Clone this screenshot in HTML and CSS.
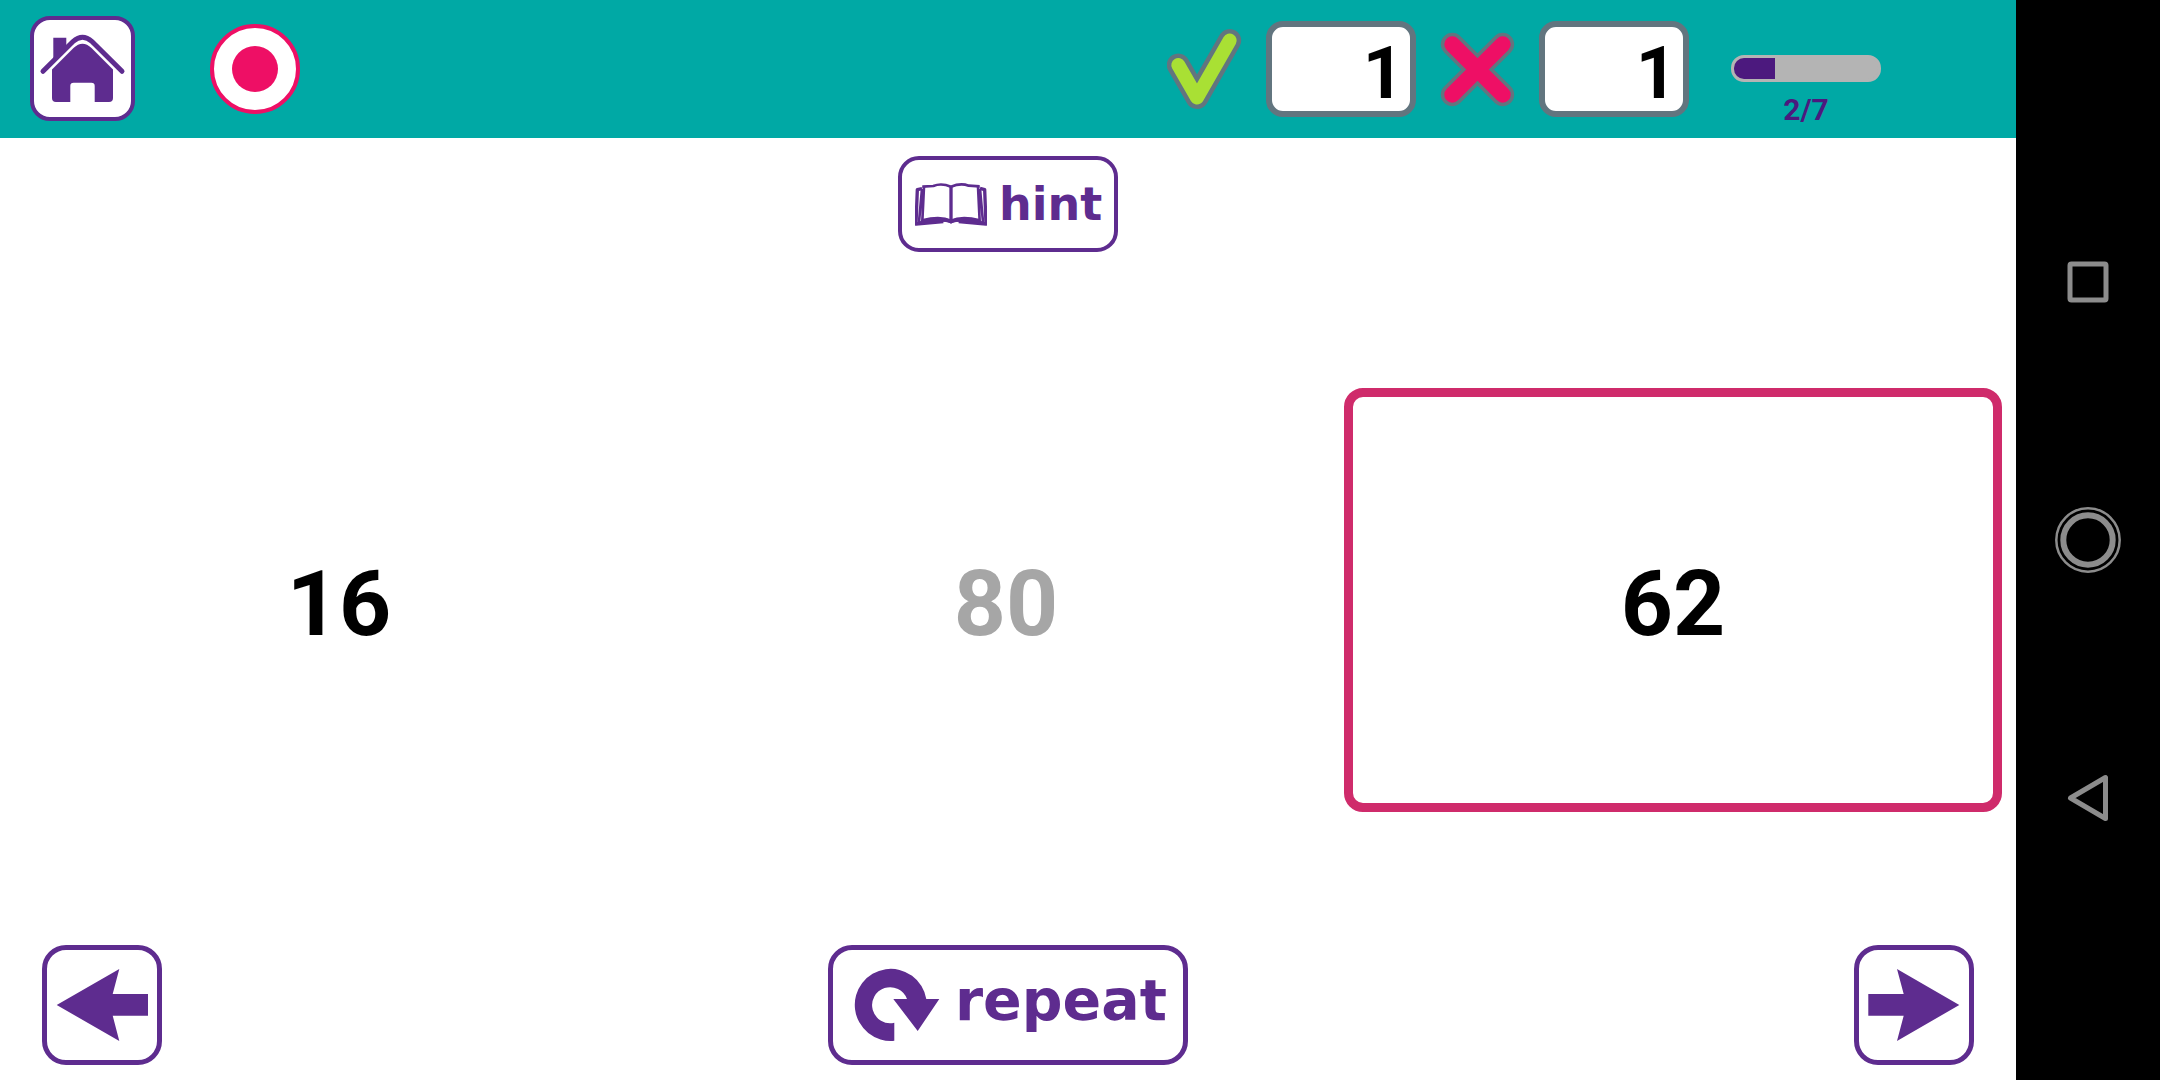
FILE: index.html
```html
<!DOCTYPE html>
<html lang="en">
<head>
<meta charset="utf-8">
<meta name="viewport" content="width=device-width, initial-scale=1">
<title>Number exercise</title>
<link rel="stylesheet" href="styles.css">
</head>
<body>
<div class="app">
  <header class="topbar">
    <button class="btn btn-home" type="button" aria-label="Home">
      <svg viewBox="4 4 97 97" aria-hidden="true">
        <path class="fill" d="M23.3 21.7h13v10l-13 13z"/>
        <path class="roof" d="M13 55.3 43 25.5Q52.5 17 62 25.5L92 55.3"/>
        <path class="fill" d="M22 53.5 43.5 32Q52.5 23.500 61.500 32L83 53.5V82q0 4-4 4H64.700V70q0-3.300-3.300-3.300H43.600q-3.300 0-3.300 3.300V86H26q-4 0-4-4z"/>
      </svg>
    </button>
    <button class="record" type="button" aria-label="Record"><span class="record-dot"></span></button>
    <div class="score">
      <svg class="check" viewBox="0 0 75 84" aria-hidden="true">
        <path class="mark-edge" d="M11.300 38 30 70.500 62.700 13.500"/>
        <path class="check-face" d="M11.300 38 30 70.500 62.700 13.500"/>
      </svg>
      <input class="score-box" type="text" value="1" aria-label="Correct answers" readonly>
      <svg class="cross" viewBox="0 0 75 75" aria-hidden="true">
        <path class="mark-edge" d="M12.300 12.300 62.700 62.700M62.700 12.300 12.300 62.700"/>
        <path class="cross-face" d="M12.300 12.300 62.700 62.700M62.700 12.300 12.300 62.700"/>
      </svg>
      <input class="score-box" type="text" value="1" aria-label="Wrong answers" readonly>
    </div>
    <div class="steps">
      <progress class="steps-bar" id="steps" value="2" max="7"></progress>
      <label class="steps-label" for="steps">2/7</label>
    </div>
  </header>

  <main class="exercise">
    <button class="btn btn-hint" type="button">
      <svg class="book" viewBox="105 125 216 132" aria-hidden="true">
        <path class="book-line thick" d="M213 139V245"/>
        <path class="book-line" d="M213 139Q184 127 160 137L127 139M213 139Q242 127 266 136L299 138"/>
        <path class="book-line" d="M132 137 127 242M294 137 299 242M126 146 117 245M300 146 309 245"/>
        <path class="book-line thick" d="M126 145 112 148 108 251 190 244M300 144 314 148 318 251 236 244"/>
        <path class="book-line" d="M127 240Q180 226 213 241Q246 226 299 240M120 247Q180 232 213 245Q246 232 306 247"/>
        <path class="fill" d="M196 233 213 239 230 233 242 244 222 245 213 250 204 245 184 244z"/>
      </svg>
      <span>hint</span>
    </button>

    <div class="choices">
      <button class="choice" type="button">16</button>
      <button class="choice choice-muted" type="button">80</button>
      <button class="choice choice-selected" type="button" aria-pressed="true">62</button>
    </div>

    <div class="controls">
      <button class="btn btn-step" type="button" aria-label="Previous">
        <svg viewBox="5 5 110 110" aria-hidden="true"><path class="fill" d="M14.700 60 77.300 24 70.700 49H106V70.700H70.700L77.300 96z"/></svg>
      </button>
      <button class="btn btn-repeat" type="button">
        <svg class="loop" viewBox="26 20 88 80" aria-hidden="true"><path class="fill" d="M67.300 95.700A36 36 0 1 1 99.300 54H112.300L90.700 86 66.300 54H80A18 18 0 1 0 67.300 77.700z"/></svg>
        <span class="repeat-text">repeat</span>
      </button>
      <button class="btn btn-step" type="button" aria-label="Next">
        <svg viewBox="5 5 110 110" aria-hidden="true"><path class="fill" d="M105.300 60 43 24 49.700 49H14.300V70.700H49.700L43 96z"/></svg>
      </button>
    </div>
  </main>
</div>

<nav class="sysnav" aria-label="System">
  <button type="button" aria-label="Recent apps">
    <svg viewBox="0 0 66 66" aria-hidden="true"><rect x="15" y="15" width="36" height="36" rx="1.500" stroke-width="5"/></svg>
  </button>
  <button type="button" aria-label="Home screen">
    <svg viewBox="0 0 66 66" aria-hidden="true"><circle cx="33" cy="33" r="31.700" stroke-width="2.500"/><circle cx="33" cy="33" r="24.700" stroke-width="6"/></svg>
  </button>
  <button type="button" aria-label="Back">
    <svg viewBox="0 0 66 66" aria-hidden="true"><path d="M15.500 33 50.500 12.500V53.500z" stroke-width="5"/></svg>
  </button>
</nav>
</body>
</html>
```
FILE: styles.css
```css
:root {
  --purple: #5e2c8f;
  --deep-purple: #4c197e;
  --teal: #00a9a5;
  --pink: #ee0f65;
  --slate: #62757f;
}

* { box-sizing: border-box; }

body {
  margin: 0;
  min-height: 100vh;
  display: flex;
  background: #fff;
  font-family: Roboto, "Liberation Sans", sans-serif;
  font-weight: 700;
}

button {
  margin: 0;
  padding: 0;
  border: 0;
  background: none;
  font: inherit;
  color: inherit;
  cursor: pointer;
}

svg { display: block; fill: none; flex: none; }

.fill { fill: var(--purple); }

.app {
  flex: 1;
  min-width: 0;
  display: flex;
  flex-direction: column;
}

/* Top bar */
.topbar {
  height: 138px;
  padding: 0 135px 0 30px;
  display: flex;
  align-items: center;
  background: var(--teal);
}

.btn {
  display: flex;
  align-items: center;
  border: 5px solid var(--purple);
  border-radius: 24px;
  background: #fff;
  color: var(--purple);
  font-family: "DejaVu Sans", Verdana, sans-serif;
  font-weight: 700;
}

.btn-home {
  width: 105px;
  height: 105px;
  margin-bottom: 1px;
  border-width: 4px;
  border-radius: 20px;
}

.roof {
  stroke: var(--purple);
  stroke-width: 5;
  stroke-linecap: round;
}

.record {
  width: 90px;
  height: 90px;
  margin-left: 75px;
  display: grid;
  place-items: center;
  border: 4px solid var(--pink);
  border-radius: 50%;
  background: #fff;
}

.record-dot {
  width: 46px;
  height: 46px;
  border-radius: 50%;
  background: var(--pink);
}

.score {
  margin-left: auto;
  display: flex;
  align-items: center;
  gap: 24px;
}

.check { width: 75px; height: 84px; }
.cross { width: 75px; height: 75px; }

.check path,
.cross path {
  stroke-linecap: round;
  stroke-linejoin: round;
}

.mark-edge { stroke: var(--slate); stroke-width: 23; }
.check-face { stroke: #a9e034; stroke-width: 14; }
.cross-face { stroke: var(--pink); stroke-width: 16; }

.score-box {
  width: 150px;
  height: 96px;
  padding: 8px 6px 0 0;
  border: 6px solid var(--slate);
  border-radius: 17px;
  background: #fff;
  color: #000;
  font: inherit;
  font-size: 72px;
  text-align: right;
}

.steps {
  align-self: flex-start;
  width: 150px;
  margin-left: 42px;
  padding-top: 55px;
  display: flex;
  flex-direction: column;
  align-items: center;
  gap: 10px;
}

.steps-bar {
  appearance: none;
  width: 100%;
  height: 27px;
  border: 3px solid #b4b4b4;
  border-radius: 13px;
  background: #b4b4b4;
}

.steps-bar::-webkit-progress-bar { background: #b4b4b4; border-radius: 10px; }
.steps-bar::-webkit-progress-value { background: var(--deep-purple); border-radius: 10px 0 0 10px; }

.steps-label {
  font-size: 30px;
  line-height: 36px;
  color: var(--deep-purple);
}

/* Exercise */
.exercise {
  flex: 1;
  padding: 18px 0 15px;
  display: flex;
  flex-direction: column;
  align-items: center;
  justify-content: space-between;
}

.btn-hint {
  height: 96px;
  width: 220px;
  padding-left: 13px;
  gap: 12px;
  border-width: 4px;
  border-radius: 21px;
  font-size: 46px;
}

.book { width: 72px; height: 44px; }

.book-line {
  stroke: var(--purple);
  stroke-width: 8;
  stroke-linejoin: round;
}

.thick { stroke-width: 10; }

.choices {
  width: 100%;
  padding: 3px 14px 0 10px;
  display: grid;
  grid-template-columns: repeat(3, 1fr);
  gap: 9px;
}

.choice {
  height: 424px;
  padding-top: 8px;
  border: 9px solid transparent;
  border-radius: 19px;
  font-size: 91px;
  color: #000;
}

.choice-muted { color: #a6a6a6; }
.choice-selected { border-color: #cf2b6b; }

.controls {
  width: 100%;
  padding: 0 42px;
  display: flex;
  justify-content: space-between;
}

.btn-step { width: 120px; height: 120px; }

.btn-repeat {
  width: 360px;
  height: 120px;
  padding-left: 20px;
  gap: 14px;
  font-size: 57px;
}

.loop { width: 88px; height: 80px; }
.repeat-text { padding-bottom: 10px; }

/* System navigation strip */
.sysnav {
  flex: none;
  width: 144px;
  padding: 153px 0;
  display: grid;
  grid-template-rows: repeat(3, 1fr);
  place-items: center;
  background: #000;
}

.sysnav svg {
  width: 66px;
  height: 66px;
  stroke: #8c8c8c;
  stroke-linejoin: round;
}
```
